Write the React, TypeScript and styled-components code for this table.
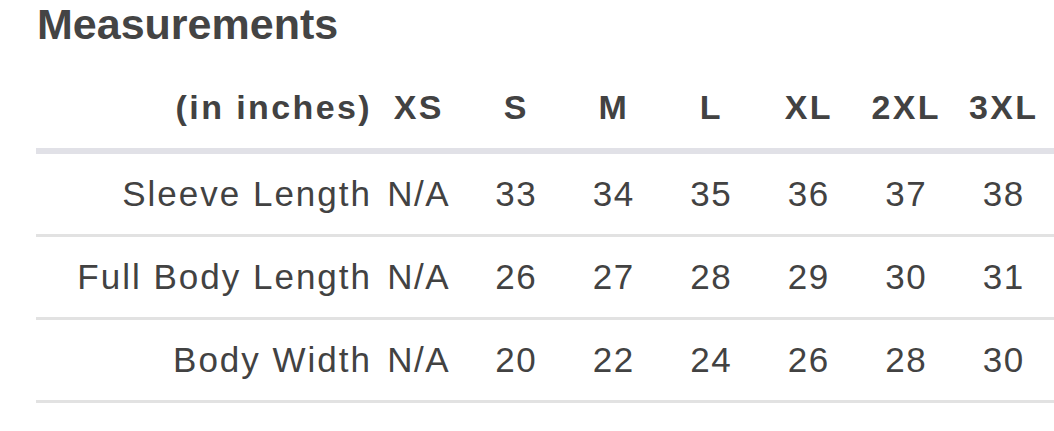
import React from 'react'
import styled, { createGlobalStyle } from 'styled-components'

const GlobalStyle = createGlobalStyle`
    html, body {
        margin: 0;
        padding: 0;
        background: #ffffff;
        overflow: hidden;
    }
    body {
        font-family: "Liberation Sans", Arial, Helvetica, sans-serif;
        color: #424242;
    }
`

const sizes = ['XS', 'S', 'M', 'L', 'XL', '2XL', '3XL']

const rows = [
    { label: 'Sleeve Length', values: ['N/A', '33', '34', '35', '36', '37', '38'] },
    { label: 'Full Body Length', values: ['N/A', '26', '27', '28', '29', '30', '31'] },
    { label: 'Body Width', values: ['N/A', '20', '22', '24', '26', '28', '30'] },
]

const App = () => {
  return (
    <Page>
        <GlobalStyle />
        <Title>Measurements</Title>
        <Table>
            <HeadRow>
                <LabelCell $bold>(in inches)</LabelCell>
                {sizes.map((s) => (
                    <ValueCell key={s} $bold>{s}</ValueCell>
                ))}
            </HeadRow>
            {rows.map((row) => (
                <BodyRow key={row.label}>
                    <LabelCell>{row.label}</LabelCell>
                    {row.values.map((v, i) => (
                        <ValueCell key={i}>{v}</ValueCell>
                    ))}
                </BodyRow>
            ))}
        </Table>
    </Page>
  )
}

const Page = styled.div`
    padding: 0 0 0 36px;
`

const Title = styled.h2`
    margin: 0;
    font-size: 43px;
    line-height: 49px;
    font-weight: 700;
    color: #444444;
    padding-left: 1px;
`

const Table = styled.div`
    display: flex;
    flex-direction: column;
    width: 1030px;
    margin-top: 39px;
`

// label column + 7 size columns
const HeadRow = styled.div`
    display: grid;
    grid-template-columns: 334px repeat(7, 97.5px);
    align-items: end;
    padding-bottom: 22px;
    border-bottom: 6px solid #e1e1e7;
`

const BodyRow = styled.div`
    display: grid;
    grid-template-columns: 334px repeat(7, 97.5px);
    align-items: center;
    height: 80px;
    border-bottom: 3px solid #e2e2e2;
`

const LabelCell = styled.div<{ $bold?: boolean }>`
    text-align: right;
    font-size: ${(p) => (p.$bold ? '34px' : '35px')};
    font-weight: ${(p) => (p.$bold ? 700 : 400)};
    letter-spacing: ${(p) => (p.$bold ? '2.4px' : '2px')};
    line-height: 38px;
    white-space: nowrap;
    margin-right: -2px;
`

const ValueCell = styled.div<{ $bold?: boolean }>`
    text-align: center;
    font-size: ${(p) => (p.$bold ? '34px' : '35px')};
    font-weight: ${(p) => (p.$bold ? 700 : 400)};
    letter-spacing: ${(p) => (p.$bold ? '2.4px' : '1.5px')};
    line-height: 38px;
    white-space: nowrap;
`

export default App
